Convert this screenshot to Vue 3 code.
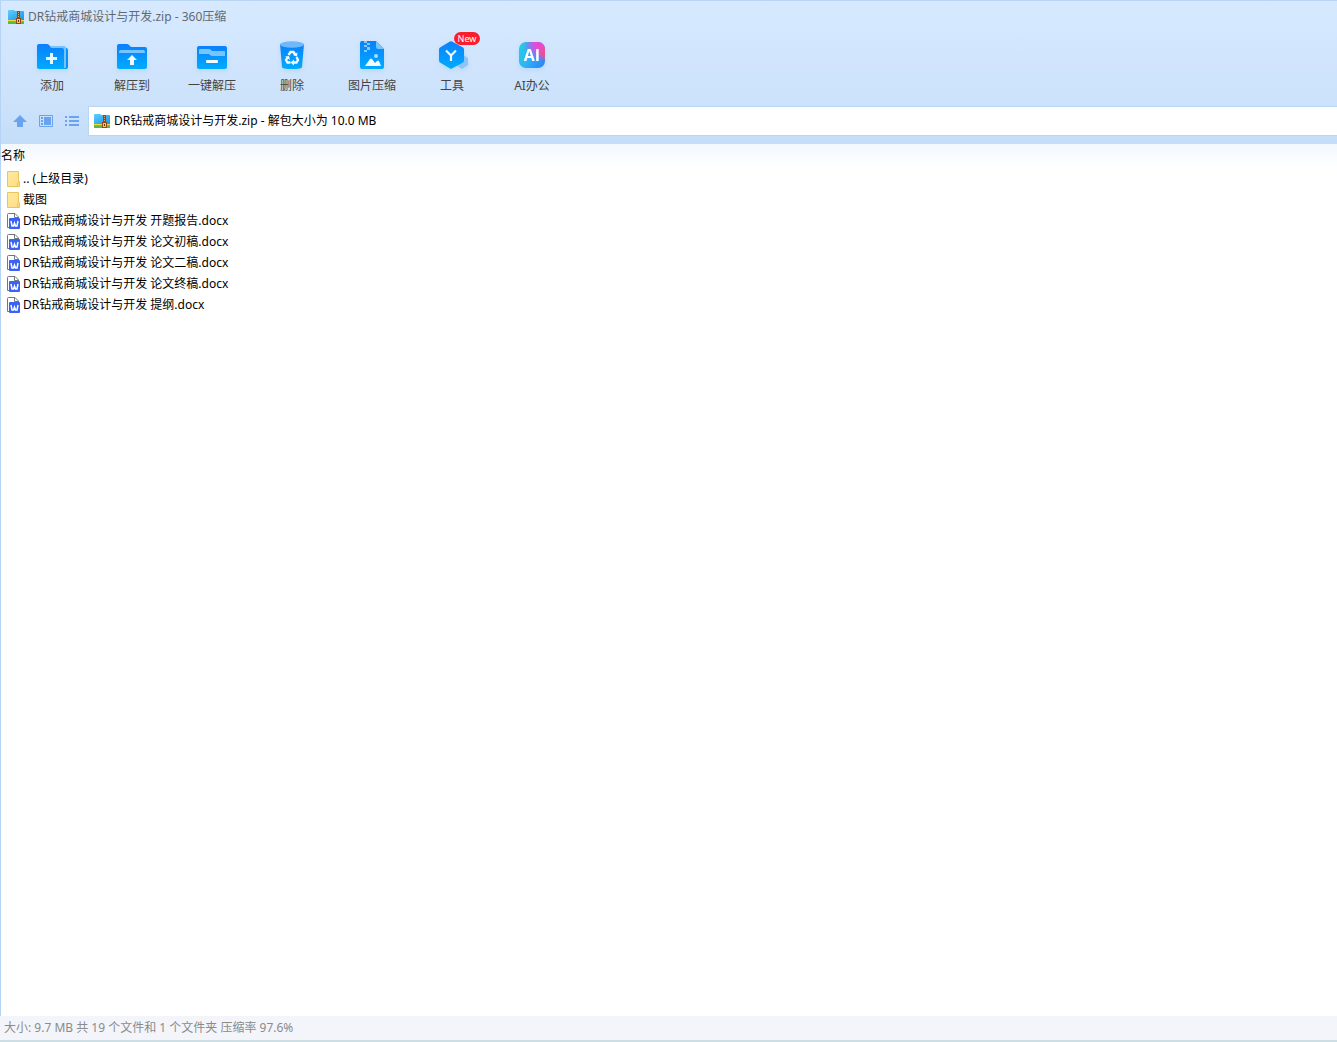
<script setup>
import { ref } from 'vue'

const archive = 'DR钻戒商城设计与开发.zip'
const address = ref(`${archive} - 解包大小为 10.0 MB`)

const tools = [
  { id: 'add', label: '添加' },
  { id: 'extract', label: '解压到' },
  { id: 'quick', label: '一键解压' },
  { id: 'delete', label: '删除' },
  { id: 'image', label: '图片压缩' },
  { id: 'tools', label: '工具', badge: 'New' },
  { id: 'ai', label: 'AI办公' },
]

const entries = [
  { name: '.. (上级目录)', type: 'folder' },
  { name: '截图', type: 'folder' },
  { name: 'DR钻戒商城设计与开发 开题报告.docx', type: 'doc' },
  { name: 'DR钻戒商城设计与开发 论文初稿.docx', type: 'doc' },
  { name: 'DR钻戒商城设计与开发 论文二稿.docx', type: 'doc' },
  { name: 'DR钻戒商城设计与开发 论文终稿.docx', type: 'doc' },
  { name: 'DR钻戒商城设计与开发 提纲.docx', type: 'doc' },
]
</script>

<template>
  <div class="window">
    <svg class="sprite" aria-hidden="true">
      <defs>
        <linearGradient id="blue" x1="0" y1="0" x2="0" y2="1">
          <stop offset="0" stop-color="#0a80fb" />
          <stop offset="1" stop-color="#00abff" />
        </linearGradient>
        <linearGradient id="zipblue" x1="0" y1="0" x2="1" y2="1">
          <stop offset="0" stop-color="#5fd0fa" />
          <stop offset="1" stop-color="#1a93ee" />
        </linearGradient>
        <linearGradient id="yellow" x1="0" y1="0" x2="1" y2="1">
          <stop offset="0" stop-color="#ffeaa6" />
          <stop offset="1" stop-color="#fddc7c" />
        </linearGradient>
        <linearGradient id="aibase" x1="0" y1="0.2" x2="1" y2="0.8">
          <stop offset="0" stop-color="#1fd0e4" />
          <stop offset="0.45" stop-color="#2fb4f4" />
          <stop offset="1" stop-color="#2a86fb" />
        </linearGradient>
        <radialGradient id="aipink" cx="0.8" cy="0.1" r="0.65">
          <stop offset="0" stop-color="#fa3fc4" />
          <stop offset="0.45" stop-color="#d452e4" stop-opacity="0.9" />
          <stop offset="1" stop-color="#7b6cf5" stop-opacity="0" />
        </radialGradient>
        <radialGradient id="aired" cx="1" cy="0.42" r="0.35">
          <stop offset="0" stop-color="#ff4a70" />
          <stop offset="1" stop-color="#ff4a90" stop-opacity="0" />
        </radialGradient>
      </defs>
      <symbol id="zip" viewBox="0 0 16 16">
        <path d="M0 2q0-1 1-1h5l1 1h8q1 0 1 1v8H0z" fill="url(#zipblue)" />
        <path d="M0 11h16v1H0z" fill="#f7d33c" />
        <path d="M0 12h16v1H0z" fill="#f28a1d" />
        <path d="M0 13h16v2H0z" fill="#56bd3c" />
        <path d="M9 2h3v9H9z" fill="#8c4a1c" />
        <path d="M10 3h1v1h-1zm0 2h1v1h-1zm0 2h1v1h-1z" fill="#d9a362" />
        <path d="M8 9h5v6H8z" fill="#8c4a1c" />
        <path d="M9 10h3v4H9z" fill="#f6c453" />
        <path d="M10 11h1v2h-1z" fill="#6d3512" />
      </symbol>
      <symbol id="folder" viewBox="0 0 16 16">
        <path d="M1.500.500h11v10h1v5h-12z" fill="url(#yellow)" stroke="#e9c65c" />
        <path d="M11.500 15v-3l1-1" fill="none" stroke="#e9c65c" />
      </symbol>
      <symbol id="doc" viewBox="0 0 16 16">
        <path d="M1.500 14.500V1.500q0-1 1-1H9l3.500 3.500v10.500z" fill="#fff" stroke="#717680" />
        <path d="M8.500.500v4h4" fill="none" stroke="#717680" />
        <rect x="3" y="5" width="11" height="11" rx="1" fill="#3a62f3" />
        <path d="m5 8 1 5h1.500l1-3 1 3H11l1-5" fill="none" stroke="#fff" stroke-width="1.500" />
      </symbol>
    </svg>

    <header class="chrome">
      <div class="title">
        <svg class="small-icon"><use href="#zip" /></svg>
        <span>{{ archive }} - 360压缩</span>
      </div>

      <nav class="toolbar">
        <button v-for="tool in tools" :key="tool.id" class="tool" type="button">
          <span class="picture">
            <svg v-if="tool.id === 'add'" viewBox="0 0 32 32">
              <path d="M28 7h2q2 0 2 2v17q0 2-2 2h-3z" fill="#0494fc" transform="translate(0 1)" />
              <path d="M1 6q0-2 2-2h8q1 0 2 1l2 2h12q2 0 2 2v20H3q-2 0-2-2z" fill="url(#blue)" />
              <path d="M14 6h14q2 0 2 2v19q0 1-1 1h-1V10q0-2-2-2H15z" fill="#78c2ff" />
              <path d="M15.500 13v11M10 18.500h11" stroke="#e9f8ff" stroke-width="3" />
            </svg>
            <svg v-else-if="tool.id === 'extract'" viewBox="0 0 32 32">
              <path d="M1 6q0-2 2-2h8q1 0 2 1l2 2h14q2 0 2 2v18q0 2-2 2H3q-2 0-2-2z" fill="url(#blue)" />
              <path d="M3 13v-1q0-2 2-2h22q2 0 2 2v1z" fill="#78c4ff" />
              <path d="m16 15 5 5h-3v5h-4v-5h-3z" fill="#f1fbff" />
            </svg>
            <svg v-else-if="tool.id === 'quick'" viewBox="0 0 32 32">
              <rect x="1" y="6" width="30" height="23" rx="2" fill="url(#blue)" />
              <path d="M3 10q0-1 1-1h9q1 0 2 1l1 1h12q1 0 1 1v4H17q-2 0-3-1l-1-1H3z" fill="#78c4ff" />
              <rect x="10" y="20" width="12" height="3" rx="1" fill="#f1fbff" />
            </svg>
            <svg v-else-if="tool.id === 'delete'" viewBox="0 0 32 32">
              <path d="M4 4h24l-2 23q0 2-10 2T6 27z" fill="url(#blue)" />
              <ellipse cx="16" cy="4.500" rx="12" ry="3.200" fill="#6fb9fb" />
              <path d="m12.500 15 2-3h3l2 3M20.500 17l1.500 3-1.500 2.500H18M14.500 22.500h-3L10 20l1.500-2.500" fill="none" stroke="#f1fbff" stroke-width="2.400" />
              <path d="m21.500 12.500-.500 4-4-1.500zM9 16.500l4-.500 1 4zM18 19.500v6l-3.500-3z" fill="#f1fbff" />
            </svg>
            <svg v-else-if="tool.id === 'image'" viewBox="0 0 32 32">
              <path d="M4 3q0-2 2-2h14l8 8v18q0 2-2 2H6q-2 0-2-2z" fill="url(#blue)" />
              <path d="M20 1v6q0 2 2 2h6z" fill="#76c5fb" />
              <path d="M8 1h3v2h3v2h-3v2h3v3h-3v2H8v-2h3V7H8V5h3V3H8z" fill="#83cafb" />
              <circle cx="20" cy="16" r="2" fill="#a9ddff" />
              <path d="m9 26 5-7q1-1 2 0l3 4 2-2q1-1 2 0l2 5z" fill="#f1fbff" />
            </svg>
            <svg v-else-if="tool.id === 'tools'" viewBox="0 0 32 32">
              <path d="m26 14 6 4v7l-6 4-6-4v-7z" fill="#8ac5fa" />
              <path d="M14 1.500q1-.500 2 0l11 6q1 .500 1 2v11q0 1-1 2l-11 6q-1 .500-2 0l-10-6q-1-1-1-2v-11q0-1.500 1-2z" fill="url(#blue)" />
              <path d="m10 10.500 5 5 5-5M15 15v6" fill="none" stroke="#eaf7ff" stroke-width="2.200" />
            </svg>
            <svg v-else viewBox="0 0 32 32">
              <rect x="3" y="2" width="26" height="26" rx="7" fill="url(#aibase)" />
              <rect x="3" y="2" width="26" height="26" rx="7" fill="url(#aipink)" />
              <rect x="3" y="2" width="26" height="26" rx="7" fill="url(#aired)" />
              <text x="16" y="21" text-anchor="middle" class="ai-mark">AI</text>
            </svg>
            <span v-if="tool.badge" class="badge">{{ tool.badge }}</span>
          </span>
          <span class="label">{{ tool.label }}</span>
        </button>
      </nav>

      <div class="location">
        <div class="nav-buttons">
          <button type="button" aria-label="上级目录">
            <svg viewBox="0 0 16 16"><path d="m8 2 7 7h-4v5H5V9H1z" fill="#69a3ef" /></svg>
          </button>
          <button type="button" aria-label="预览">
            <svg viewBox="0 0 16 16">
              <path d="M1.500 2.500h13v11h-13z" fill="none" stroke="#69a3ef" />
              <path d="M6 4h7v8H6zM3 4h2v2H3zm0 3h2v2H3zm0 3h2v2H3z" fill="#69a3ef" />
            </svg>
          </button>
          <button type="button" aria-label="列表">
            <svg viewBox="0 0 16 16">
              <path d="M1 3h2v2H1zm0 4h2v2H1zm0 4h2v2H1zM5 3h10v2H5zm0 4h10v2H5zm0 4h10v2H5z" fill="#69a3ef" />
            </svg>
          </button>
        </div>
        <label class="address">
          <svg class="small-icon"><use href="#zip" /></svg>
          <input v-model="address" type="text" aria-label="地址" />
        </label>
      </div>
    </header>

    <main class="files">
      <table>
        <thead>
          <tr><th scope="col">名称</th></tr>
        </thead>
        <tbody>
          <tr v-for="entry in entries" :key="entry.name">
            <td>
              <div class="entry">
                <svg class="small-icon"><use :href="'#' + entry.type" /></svg>
                <span>{{ entry.name }}</span>
              </div>
            </td>
          </tr>
        </tbody>
      </table>
    </main>

    <footer class="status">大小: 9.7 MB 共 19 个文件和 1 个文件夹 压缩率 97.6%</footer>
  </div>
</template>

<style>
body {
  margin: 0;
}
</style>

<style scoped>
.window {
  display: flex;
  flex-direction: column;
  min-height: 100vh;
  box-sizing: border-box;
  background: #fff;
  color: #000;
  font: 12px/16px "Noto Sans", "Noto Sans CJK SC", sans-serif;
}

.sprite {
  position: absolute;
  width: 0;
  height: 0;
}

.chrome {
  box-sizing: border-box;
  border-top: 1px solid #b9d7f5;
  border-left: 1px solid #b5d3f5;
  padding-bottom: 8px;
  background: linear-gradient(#d6e9ff, #cce2fb 72%, #c3ddf8);
}

.small-icon {
  width: 16px;
  height: 16px;
  flex: none;
}

.title {
  display: flex;
  align-items: center;
  gap: 4px;
  height: 31px;
  padding-left: 7px;
  color: #626970;
}

.toolbar {
  display: flex;
  height: 74px;
  padding-left: 11px;
}

button {
  border: 0;
  padding: 0;
  background: none;
  color: inherit;
  font: inherit;
}

.tool {
  display: flex;
  flex-direction: column;
  align-items: center;
  gap: 6px;
  width: 80px;
  padding-top: 8px;
  color: #444;
}

.picture {
  position: relative;
  width: 32px;
  height: 32px;
}

.picture svg {
  display: block;
  width: 32px;
  height: 32px;
  filter: drop-shadow(0 2px 2px #78b4f040);
}

.ai-mark {
  fill: #fff;
  font: bold 16px "Open Sans", sans-serif;
}

.badge {
  position: absolute;
  top: -8px;
  left: 18px;
  width: 26px;
  height: 13px;
  border-radius: 7px;
  background: #fa1e2d;
  color: #fff;
  font-size: 9px;
  line-height: 13px;
  text-align: center;
}

.location {
  display: flex;
  align-items: center;
}

.nav-buttons {
  display: flex;
  gap: 10px;
  padding: 0 8px 0 11px;
}

.nav-buttons button,
.nav-buttons svg {
  display: block;
  width: 16px;
  height: 16px;
}

.address {
  display: flex;
  flex: 1;
  align-items: center;
  gap: 4px;
  height: 28px;
  padding-left: 5px;
  border: 1px solid #b9d5f4;
  border-right: 0;
  background: #fff;
}

.address input {
  flex: 1;
  min-width: 0;
  height: 16px;
  border: 0;
  padding: 0;
  outline: 0;
  background: none;
  color: #000;
  font: inherit;
}

.files {
  flex: 1;
  border-left: 1px solid #b5d3f5;
}

table {
  width: 100%;
  border-collapse: collapse;
}

th {
  height: 24px;
  padding: 0;
  background: linear-gradient(#f2f8fe, #fff);
  font-weight: normal;
  text-align: left;
}

td {
  height: 21px;
  padding: 0;
}

.entry {
  display: flex;
  align-items: center;
  gap: 1px;
  padding-left: 5px;
}

.status {
  height: 24px;
  padding-left: 4px;
  border-bottom: 2px solid #cddfe5;
  background: #f3f5fa;
  color: #8b8b8b;
  line-height: 24px;
}
</style>
